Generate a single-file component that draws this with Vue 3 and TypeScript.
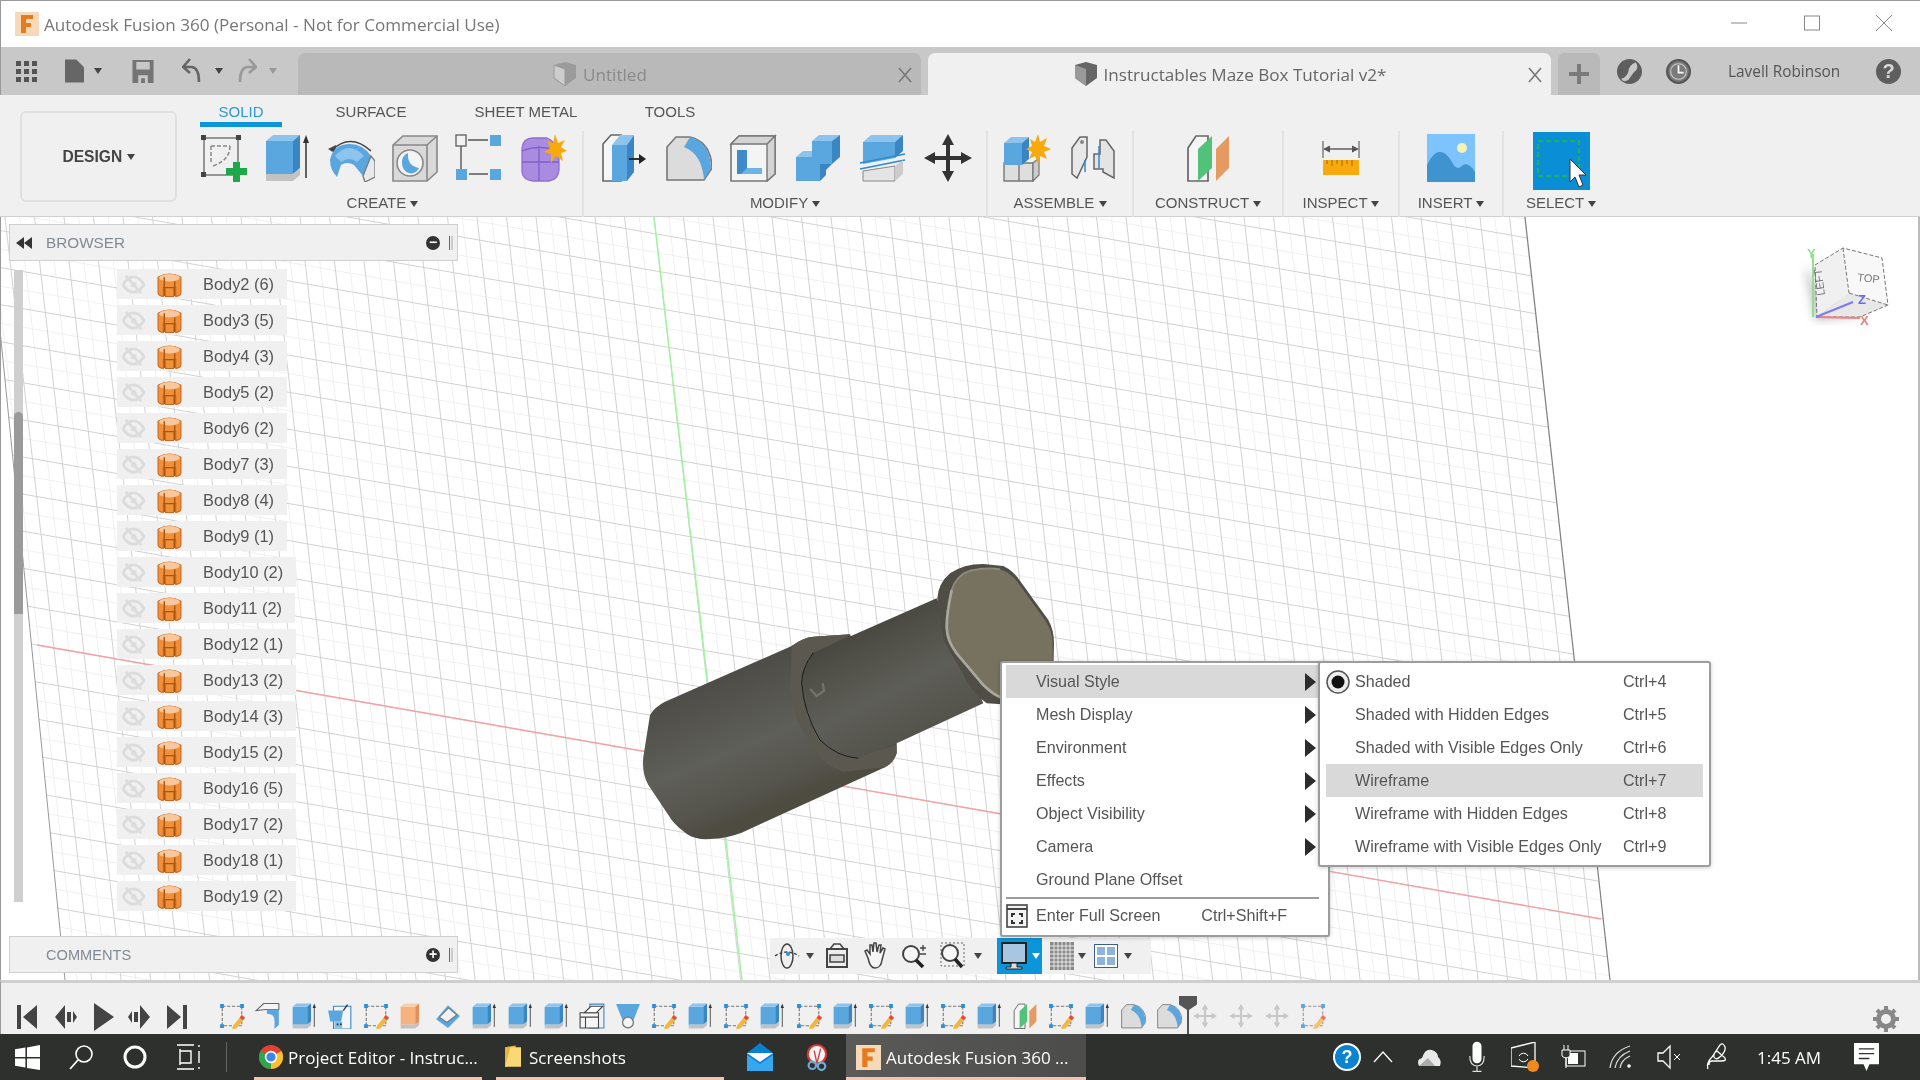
<template>
  <div class="app">
    <!-- shared icon symbols -->
    <svg class="defs" width="0" height="0" aria-hidden="true">
      <symbol id="new-sketch" viewBox="0 0 48 48">
        <path d="M5 4H39V41H5Z" fill="none" stroke="#777" stroke-width="1.5" />
        <path d="M12 12H31M12 12V30M31 12Q31 26 14 32" fill="none" stroke="#888" stroke-width="1.5" stroke-dasharray="4 2" />
        <path d="M2 1h5v5H2ZM37 1h5v5h-5ZM2 38h5v5H2Z" fill="#444" />
        <path d="M34 28h7v6h7v7h-7v7h-7v-7h-7v-7h7Z" fill="#1fa84a" />
      </symbol>
      <symbol id="extrude" viewBox="0 0 48 48">
        <path d="M3 7H30V40H3Z" fill="#5aa7e0" />
        <path d="M3 7L10 1H37L30 7Z" fill="#8cc4ee" />
        <path d="M30 7L37 1V34L30 40Z" fill="#3a86c4" />
        <path d="M3 40H30L37 34V41L30 47H3Z" fill="#c2c2c2" />
        <path d="M43 44V5" stroke="#333" stroke-width="1.5" />
        <path d="M43 1L46 9H40Z" fill="#333" />
      </symbol>
      <symbol id="revolve" viewBox="0 0 48 48">
        <path d="M4 17Q23 -2 44 17" fill="none" stroke="#444" stroke-width="1.6" />
        <path d="M1 15L9 11L8 19Z" fill="#444" />
        <path d="M3 26Q6 10 23 10Q36 10 44 22L38 36L36 42L27 31Q20 27 14 31L10 43Q3 36 3 26Z" fill="#5aa7e0" />
        <path d="M8 22Q22 6 37 22L30 28Q22 22 14 28Z" fill="#8cc4ee" />
        <path d="M44 22L48 27V43L38 48L36 42Z" fill="#e9e9e9" stroke="#777" stroke-width="1.3" />
      </symbol>
      <symbol id="hole" viewBox="0 0 48 48">
        <path d="M2 11L12 2H46V38L36 47H2Z" fill="#d9d9d9" stroke="#888" stroke-width="1.6" />
        <path d="M2 11H36V47M36 11L46 2" fill="none" stroke="#888" stroke-width="1.6" />
        <circle cx="19" cy="29" r="13" fill="#f4f4f4" stroke="#888" stroke-width="1.6" />
        <path d="M11 29A9 10 0 0 0 28 34Q16 32 17 19A9 10 0 0 0 11 29Z" fill="#5aa7e0" />
      </symbol>
      <symbol id="pattern" viewBox="0 0 48 48">
        <path d="M6 10V38M13 6H33M14 40H33" stroke="#555" stroke-width="1.4" fill="none" />
        <rect x="1" y="1" width="10" height="11" fill="#f3f3f3" stroke="#666" stroke-width="1.4" />
        <rect x="35" y="1" width="11" height="11" fill="#5aa7e0" />
        <rect x="1" y="35" width="11" height="11" fill="#5aa7e0" />
        <rect x="35" y="35" width="11" height="11" fill="#5aa7e0" />
      </symbol>
      <symbol id="create-form" viewBox="0 0 48 48">
        <path d="M3 14Q4 4 14 4H28Q34 6 40 16V36Q39 46 30 47H14Q4 46 3 38Z" fill="#a98be0" stroke="#8d6fd1" stroke-width="1.3" />
        <path d="M3 28H40M20 12V47M3 17Q20 10 40 17" stroke="#8160c8" stroke-width="1.3" fill="none" />
        <path d="M36 0L39 9L46 6L42 13L48 17L42 19L44 27L37 22L32 29L32 20L25 18L31 14L28 6L34 9Z" fill="#f7a90e" />
      </symbol>
      <symbol id="press-pull" viewBox="0 0 48 48">
        <path d="M4 47V10L12 1H22V47Z" fill="#f6f6f6" stroke="#666" stroke-width="1.6" />
        <path d="M13 11H28V47H13Z" fill="#5aa7e0" />
        <path d="M13 11L21 1H35L28 11Z" fill="#8cc4ee" />
        <path d="M28 11L35 1V38L28 47Z" fill="#3a86c4" />
        <path d="M30 25H43" stroke="#222" stroke-width="1.8" />
        <path d="M47 25L40 20V30Z" fill="#222" />
      </symbol>
      <symbol id="fillet" viewBox="0 0 48 48">
        <path d="M3 46V13L12 3H26Q47 8 48 34L40 46Z" fill="#dcdcdc" stroke="#777" stroke-width="1.6" />
        <path d="M26 3L20 13Q38 20 40 46L47 34Q46 8 26 3Z" fill="#5aa7e0" />
      </symbol>
      <symbol id="shell" viewBox="0 0 48 48">
        <path d="M2 10L10 2H46V40L38 47H2Z" fill="#f4f4f4" stroke="#777" stroke-width="1.6" />
        <path d="M38 10L46 2V40L38 47ZM2 10L10 2H46L38 10Z" fill="#d4d4d4" stroke="#777" stroke-width="1.4" />
        <path d="M8 16H18V34H33V40H8Z" fill="#3f8bc9" />
        <path d="M18 34H33V40H12Z" fill="#6db3e6" />
      </symbol>
      <symbol id="combine" viewBox="0 0 48 48">
        <path d="M18 7H38V30H18Z" fill="#5aa7e0" />
        <path d="M18 7L25 1H46L38 7Z" fill="#8cc4ee" />
        <path d="M38 7L46 1V23L38 30Z" fill="#3a86c4" />
        <path d="M2 23H26V47H2Z" fill="#5aa7e0" />
        <path d="M2 23L9 17H18V23Z" fill="#8cc4ee" />
        <path d="M26 30H38L32 36V41L26 47Z" fill="#3a86c4" />
      </symbol>
      <symbol id="split" viewBox="0 0 48 48">
        <path d="M4 8H36V24L4 30Z" fill="#5aa7e0" />
        <path d="M4 8L12 1H44L36 8Z" fill="#8cc4ee" />
        <path d="M36 8L44 1V17L36 24Z" fill="#3a86c4" />
        <path d="M1 29L46 20M1 35L46 26" stroke="#2e8bd3" stroke-width="1.7" />
        <path d="M4 37L36 32V47H4Z" fill="#e4e4e4" stroke="#888" />
        <path d="M36 32L44 26V40L36 47Z" fill="#ccc" />
      </symbol>
      <symbol id="move" viewBox="0 0 48 48">
        <path d="M24 0L30 11H26V22H37V18L48 24L37 30V26H26V37H30L24 48L18 37H22V26H11V30L0 24L11 18V22H22V11H18Z" fill="#333" />
      </symbol>
      <symbol id="assemble" viewBox="0 0 48 48">
        <path d="M1 29H16V47H1ZM16 29H30V47H16Z" fill="#dedede" stroke="#777" stroke-width="1.4" />
        <path d="M30 29L36 24V41L30 47Z" fill="#ccc" stroke="#777" stroke-width="1.2" />
        <path d="M1 9H19V31H1Z" fill="#5aa7e0" />
        <path d="M1 9L8 3H26L19 9Z" fill="#8cc4ee" />
        <path d="M19 9L26 3V25L19 31Z" fill="#3a86c4" />
        <path d="M35 0L37 8L44 4L41 12L48 15L41 18L44 25L37 22L35 30L32 22L26 25L29 18L23 15L29 12L27 5L32 8Z" fill="#f7a90e" />
      </symbol>
      <symbol id="joint" viewBox="0 0 48 48">
        <path d="M3 40V14L11 3H18V23L8 44Z" fill="#e8e8e8" stroke="#666" stroke-width="1.5" />
        <path d="M45 44V17L37 6H31V20H25V35H34V38Z" fill="#e4e4e4" stroke="#666" stroke-width="1.5" />
        <path d="M30 12V34M16 26V38" stroke="#2e8bd3" stroke-width="1.5" />
        <circle cx="13" cy="8" r="2" fill="#888" />
      </symbol>
      <symbol id="construct" viewBox="0 0 48 48">
        <path d="M4 47V14L12 2H24V47Z" fill="#f5f5f5" stroke="#666" stroke-width="1.7" />
        <path d="M14 47V15L28 2V34Z" fill="#52c27a" />
        <path d="M32 47V15L45 2V34Z" fill="#e59a62" />
      </symbol>
      <symbol id="inspect" viewBox="0 0 48 48">
        <path d="M6 7V24M42 7V24" stroke="#666" stroke-width="1.2" />
        <path d="M8 15H40" stroke="#555" stroke-width="1.4" />
        <path d="M6 15L13 11.5V18.500ZM42 15L35 11.5V18.500Z" fill="#555" />
        <rect x="6" y="26" width="36" height="15" fill="#f7a90e" />
        <path d="M10 26v4M15 26v6M20 26v4M25 26v6M30 26v4M35 26v6" stroke="#a06a08" stroke-width="1" />
      </symbol>
      <symbol id="insert" viewBox="0 0 48 48">
        <rect width="48" height="48" fill="#7dc4ff" />
        <circle cx="35" cy="14" r="5" fill="#f7f3b4" />
        <path d="M0 48V31Q12 6 25 28Q30 38 36 31Q42 28 48 38V48Z" fill="#3f93cf" />
      </symbol>
      <symbol id="t-sketch" viewBox="0 0 48 48">
        <path d="M6 6H42V42H6Z" fill="none" stroke="#777" stroke-width="2" stroke-dasharray="6 3" />
        <path d="M2 2h7v7H2ZM39 2h7v7h-7ZM2 39h7v7H2Z" fill="#2b8fdc" />
        <path d="M42 22L48 27L32 47L24 48L26 42Z" fill="#f4b63e" />
        <path d="M42 22L48 27L44 32L38 27Z" fill="#e44" />
      </symbol>
      <symbol id="t-fold" viewBox="0 0 48 48">
        <path d="M2 14L16 1H44V12H20Z" fill="#f5f5f5" stroke="#666" stroke-width="2" />
        <path d="M22 12H44V40L36 48V32Q36 20 22 20Z" fill="#5aa7e0" />
      </symbol>
      <symbol id="t-doc" viewBox="0 0 48 48">
        <path d="M12 6H44V48H12Z" fill="#f5f5f5" stroke="#3a86c4" stroke-width="2" />
        <path d="M2 14H30L26 34H6Z" fill="#5aa7e0" />
        <path d="M14 34H28V46H14Z" fill="#7fbde9" />
        <path d="M30 14L38 3" stroke="#333" stroke-width="2.5" />
        <path d="M18 38h3v3h-3ZM24 38h3v3h-3Z" fill="#333" />
      </symbol>
      <symbol id="t-orange" viewBox="0 0 48 48">
        <path d="M3 7H30V40H3Z" fill="#f5b27e" />
        <path d="M3 7L10 1H37L30 7Z" fill="#f9cfa9" />
        <path d="M30 7L37 1V34L30 40Z" fill="#e0915a" />
        <path d="M3 40H30L37 34V41L30 47H3Z" fill="#c2c2c2" />
      </symbol>
      <symbol id="t-plane" viewBox="0 0 48 48">
        <path d="M2 30L24 4L46 24L24 46Z" fill="#5aa7e0" />
        <path d="M8 26L25 9L40 22L22 36Z" fill="#f2f2f2" stroke="#777" stroke-width="2" />
      </symbol>
      <symbol id="t-table" viewBox="0 0 48 48">
        <path d="M20 2H46V46H20Z" fill="#f0f0f0" stroke="#3a86c4" stroke-width="2" />
        <path d="M2 18H36V46H2Z" fill="#f5f5f5" stroke="#444" stroke-width="2" />
        <path d="M2 26H36M12 26V46" stroke="#444" stroke-width="2" />
        <path d="M10 18L22 6H44L32 18Z" fill="#fff" stroke="#444" stroke-width="2" />
      </symbol>
      <symbol id="t-loft" viewBox="0 0 48 48">
        <path d="M2 2H46L34 32H14Z" fill="#5aa7e0" />
        <circle cx="24" cy="36" r="10" fill="#f4f4f4" stroke="#777" stroke-width="2.4" />
      </symbol>
      <symbol id="t-move" viewBox="0 0 48 48">
        <path d="M24 2L30 12H26V22H36V18L46 24L36 30V26H26V36H30L24 46L18 36H22V26H12V30L2 24L12 18V22H22V12H18Z" fill="#bbb" />
      </symbol>
      <symbol id="body" viewBox="0 0 24 24">
        <path d="M1 5Q12 -1 23 5V20Q23 23 18 23.5V15H16V23.5H8V15H6V23.5Q1 23 1 20Z" fill="#f0903a" stroke="#c8661c" stroke-width="1" />
        <ellipse cx="12" cy="5.5" rx="10" ry="3.5" fill="#f8c79b" />
        <path d="M8 15H16M7 15V23M17 15V23M7 5V15M17 9V15" stroke="#a85510" stroke-width="1.4" fill="none" />
      </symbol>
      <symbol id="hidden-eye" viewBox="0 0 24 24">
        <path d="M1 12Q6 4 12 4Q18 4 23 12Q18 20 12 20Q6 20 1 12Z" fill="none" stroke="#dcdcdc" stroke-width="3" />
        <path d="M4 3L20 21" stroke="#dcdcdc" stroke-width="3" />
        <circle cx="12" cy="12" r="3" fill="#dcdcdc" />
      </symbol>
      <symbol id="close-x" viewBox="0 0 14 16">
        <path d="M1 1L13 15M13 1L1 15" stroke="#777" stroke-width="1.6" />
      </symbol>
    </svg>

    <!-- title bar -->
    <header class="titlebar">
      <svg class="app-icon" viewBox="0 0 24 24">
        <rect width="24" height="24" fill="#f6d9b8" />
        <path d="M6 3H18V7H11V11H16V15H11V21H6Z" fill="#e57a1e" />
      </svg>
      <span class="title">Autodesk Fusion 360 (Personal - Not for Commercial Use)</span>
      <div class="win-ctl">
        <svg viewBox="0 0 58 32" width="58" height="32"><path d="M19 15H35" stroke="#888" stroke-width="1" /></svg>
        <svg viewBox="0 0 58 32" width="58" height="32"><rect x="21.500" y="8" width="15" height="14" fill="none" stroke="#888" /></svg>
        <svg viewBox="0 0 58 32" width="58" height="32"><path d="M22 7L38 23M38 7L22 23" stroke="#888" /></svg>
      </div>
    </header>

    <!-- tab bar -->
    <div class="tabbar">
      <div class="qat">
        <svg class="q-grid" viewBox="0 0 21 21">
          <path d="M0 0h5v5H0ZM8 0h5v5H8ZM16 0h5v5h-5ZM0 8h5v5H0ZM8 8h5v5H8ZM16 8h5v5h-5ZM0 16h5v5H0ZM8 16h5v5H8ZM16 16h5v5h-5Z" fill="#555" />
        </svg>
        <svg class="q-doc" viewBox="0 0 20 24"><path d="M0 0H12L20 8V24H0Z" fill="#666" /></svg>
        <i class="caret q-c1"></i>
        <svg class="q-save" viewBox="0 0 22 24">
          <path d="M0 0H22V24H0Z" fill="#757575" />
          <path d="M4 2H18V10H4ZM6 16H16V24H13V19H9V24H6Z" fill="#c8c8c8" />
        </svg>
        <svg class="q-undo" viewBox="0 0 22 26"><path d="M8 1L1 9L8 15M2 9H10Q17 10 17 24" fill="none" stroke="#666" stroke-width="2.600" /></svg>
        <i class="caret q-c2"></i>
        <svg class="q-redo" viewBox="0 0 22 26"><path d="M14 1L21 9L14 15M20 9H12Q5 10 5 24" fill="none" stroke="#999" stroke-width="2.600" /></svg>
        <i class="caret q-c3"></i>
      </div>
      <div class="tab tab-off">
        <svg class="tab-cube" viewBox="0 0 24 26"><path d="M1 4L12 1L23 4V17L12 25L1 17Z" fill="#9b9b9b" /><path d="M1 4L12 8V25L1 17Z" fill="#ccc" stroke="#999" /></svg>
        <span>Untitled</span>
        <svg class="tab-x" width="14" height="16"><use href="#close-x" /></svg>
      </div>
      <div class="tab tab-on">
        <svg class="tab-cube" viewBox="0 0 24 26"><path d="M1 4L12 1L23 4V17L12 25L1 17Z" fill="#666" /><path d="M1 4L12 8V25L1 17Z" fill="#999" /></svg>
        <span>Instructables Maze Box Tutorial v2*</span>
        <svg class="tab-x" width="14" height="16"><use href="#close-x" /></svg>
      </div>
      <div class="plus">
        <svg viewBox="0 0 20 20" width="20" height="20"><path d="M8 0h4v8h8v4h-8v8H8v-8H0V8h8Z" fill="#7a7a7a" /></svg>
      </div>
      <div class="bar-right">
        <svg class="r-icon" viewBox="0 0 24 24">
          <circle cx="12" cy="12" r="12" fill="#5e5e5e" />
          <path d="M18 3Q22 9 16 13L11 20Q6 23 4 19Q9 18 11 12Q11 6 18 3Z" fill="#c8c8c8" />
        </svg>
        <svg class="r-icon" viewBox="0 0 24 24">
          <circle cx="12" cy="12" r="11" fill="#7a7a7a" stroke="#555" stroke-width="2" />
          <circle cx="12" cy="12" r="7.500" fill="none" stroke="#ccc" />
          <path d="M12 6V13H17" fill="none" stroke="#fff" stroke-width="1.600" />
        </svg>
        <span class="user">Lavell Robinson</span>
        <div class="help">?</div>
      </div>
    </div>

    <!-- ribbon -->
    <section class="ribbon">
      <button class="design">DESIGN <i class="caret"></i></button>
      <div class="ribbon-main">
        <nav class="ribbon-tabs">
          <span v-for="t in ribbonTabs" :key="t.name" class="rtab" :class="{ on: t.active }" :style="{ width: t.width + 'px' }">{{ t.name }}</span>
        </nav>
        <div class="groups">
          <div v-for="g in groups" :key="g.label" class="group" :style="{ width: g.width + 'px', paddingRight: g.shift + 'px' }">
            <div class="tools">
              <div v-for="id in g.icons" :key="id" class="tool" :style="{ width: g.cell + 'px' }">
                <svg width="48" height="48"><use :href="'#' + id" /></svg>
              </div>
              <div v-if="g.label === 'SELECT'" class="select-btn">
                <svg viewBox="0 0 57 58" width="57" height="58">
                  <rect x="5" y="9" width="41" height="35" fill="none" stroke="#1fb070" stroke-width="2" stroke-dasharray="5 3" />
                  <path d="M37 27V50L42 45L46 55L50 53L46 43H53Z" fill="#fff" stroke="#333" />
                </svg>
              </div>
            </div>
            <span class="group-label">{{ g.label }} <i class="caret"></i></span>
          </div>
        </div>
      </div>
    </section>

    <!-- viewport -->
    <main class="viewport">
      <svg class="grid" viewBox="0 217 1920 763" width="1920" height="763">
        <defs>
          <clipPath id="plane"><path d="M0 217H1525L1610 980H65L0 330Z" /></clipPath>
        </defs>
        <g clip-path="url(#plane)">
          <path v-for="l in minorLines" :key="l.key" :d="l.d" stroke="#f0f0f0" stroke-width="1" />
          <path v-for="l in majorLines" :key="l.key" :d="l.d" stroke="#d2d2d2" stroke-width="1" />
        </g>
        <path d="M1525 217L1610 980" stroke="#808080" stroke-width="1.200" fill="none" />
        <path d="M0 330L65 980" stroke="#999" stroke-width="1" fill="none" />
        <path d="M37 645L1601 919" stroke="#f6a0a6" stroke-width="1.400" />
        <path d="M654 217L742 980" stroke="#9df59d" stroke-width="1.400" />
      </svg>

      <svg class="model" viewBox="0 0 1500 990" width="500" height="330">
        <defs>
          <linearGradient id="shade-a" gradientUnits="userSpaceOnUse" x1="370" y1="380" x2="540" y2="790">
            <stop offset="0" stop-color="#4b4a44" />
            <stop offset=".55" stop-color="#5f5f59" />
            <stop offset=".85" stop-color="#55544d" />
            <stop offset="1" stop-color="#4e4b41" />
          </linearGradient>
          <linearGradient id="shade-b" gradientUnits="userSpaceOnUse" x1="820" y1="240" x2="980" y2="560">
            <stop offset="0" stop-color="#48473f" />
            <stop offset=".6" stop-color="#5e5e58" />
            <stop offset="1" stop-color="#54534c" />
          </linearGradient>
        </defs>
        <path d="M150 525Q165 500 195 485L575 318Q610 292 640 290L750 283L890 610V640Q880 670 855 682L425 878Q380 895 330 897Q290 900 265 885Q230 860 215 840L145 735Q125 700 130 650Z" fill="url(#shade-a)" />
        <path d="M575 318Q610 292 640 290L750 283L700 310L640 340L605 420L620 530L680 620L760 655L890 615V640Q880 670 855 682L730 695Q680 680 650 640L590 540L570 450Z" fill="#5b584f" />
        <path d="M640 338L760 285L1010 175L1150 490L890 610L770 655L700 640L650 590L610 490L605 400Z" fill="url(#shade-b)" />
        <path d="M640 338Q605 385 605 430Q612 520 660 600Q710 650 775 655" fill="none" stroke="#1d1d1a" stroke-width="3" />
        <path d="M630 447L650 468L672 452L668 430" fill="none" stroke="#74726a" stroke-width="7" />
        <path d="M1012 175Q1015 130 1050 100Q1090 72 1150 72L1210 78Q1240 92 1262 125L1345 240Q1362 270 1362 310L1360 400L1240 495L1160 490Q1130 470 1105 430L1030 300Z" fill="#4f4d46" />
        <path d="M1055 150Q1070 105 1110 92Q1160 82 1200 88Q1235 100 1255 130L1335 240Q1358 275 1358 310V400L1240 478Q1190 470 1150 435L1070 340Q1040 300 1040 260Z" fill="#77725f" />
        <path d="M1055 150Q1040 220 1040 260Q1040 300 1070 340L1150 435Q1180 465 1210 475" fill="none" stroke="#aaa89e" stroke-width="8" />
        <path d="M1055 150Q1070 105 1110 92Q1160 82 1200 88" fill="none" stroke="#8c897c" stroke-width="6" />
      </svg>

      <!-- browser panel -->
      <div class="panel browser">
        <svg class="back" viewBox="0 0 16 12" width="16" height="12"><path d="M8 0L0 6L8 12ZM16 0L8 6L16 12Z" fill="#333" /></svg>
        <span class="panel-title">BROWSER</span>
        <span class="round">−</span>
        <i class="handle"></i>
      </div>
      <div class="scroll"><i></i></div>
      <ul class="bodies">
        <li v-for="b in bodies" :key="b" class="body-row">
          <svg class="eye" width="23" height="23"><use href="#hidden-eye" /></svg>
          <svg class="cyl" width="25" height="25"><use href="#body" /></svg>
          <span>{{ b }}</span>
        </li>
      </ul>
      <div class="panel comments">
        <span class="panel-title">COMMENTS</span>
        <span class="round">+</span>
        <i class="handle"></i>
      </div>

      <!-- view cube -->
      <svg class="cube" viewBox="0 0 160 120" width="160" height="120">
        <defs><filter id="soft"><feGaussianBlur stdDeviation="5" /></filter></defs>
        <path d="M45 45L55 100L100 96L60 70Z" fill="#bbb" filter="url(#soft)" />
        <path d="M55 45L83 28L89 73L57 97Z" fill="#f0f0f0" />
        <path d="M83 28L122 38L128 85L89 73Z" fill="#f8f8f8" />
        <path d="M57 97L89 73L128 85L100 97Z" fill="#e8e8e8" />
        <path d="M55 45L83 28L122 38L128 85L100 97L57 97ZM83 28L89 73M89 73L128 85" fill="none" stroke="#777" stroke-dasharray="4 2" />
        <text class="cube-t" transform="translate(65 75) rotate(-98)">LEFT</text>
        <text x="97" y="61" class="cube-t" transform="rotate(6 98 62)">TOP</text>
        <path d="M53 34V97" stroke="#8fe08f" stroke-width="2" />
        <path d="M56 97L100 98" stroke="#ee8080" stroke-width="2" />
        <path d="M56 97L93 82" stroke="#7a7af0" stroke-width="2" />
        <text x="47" y="38" class="ax" fill="#8fe08f">Y</text>
        <text x="100" y="105" class="ax" fill="#ee8080">X</text>
        <text x="98" y="84" class="ax" fill="#6a6af0">Z</text>
      </svg>

      <!-- nav bar -->
      <div class="navbar">
        <svg class="nb-orbit" viewBox="0 0 26 26" width="26" height="26">
          <ellipse cx="13" cy="13" rx="6" ry="12" fill="none" stroke="#444" stroke-width="1.5" />
          <path d="M1 13Q13 5 25 13" fill="none" stroke="#444" stroke-width="1.5" stroke-dasharray="3 2" />
          <circle cx="14" cy="11" r="2" fill="#2b8fdc" />
        </svg>
        <i class="caret nc-orbit"></i>
        <svg viewBox="0 0 26 26" width="26" height="26">
          <path d="M3 6H23V24H3Z" fill="#eee" stroke="#444" stroke-width="2" />
          <path d="M6 12H20V19H6Z" fill="#ddd" stroke="#444" stroke-width="1.6" />
          <path d="M6 6L10 1H16L20 6" fill="none" stroke="#444" stroke-width="1.6" />
        </svg>
        <svg class="nb-hand" viewBox="0 0 26 28" width="26" height="28">
          <path d="M6 16L3 9L5 8L8 12L8 3L10 3L11 10L12 1L14 1L15 10L17 3L19 3L18 11L21 6L23 7L20 18Q19 26 13 26Q8 26 6 16Z" fill="#f6f6f6" stroke="#444" stroke-width="1.5" />
        </svg>
        <svg class="nb-zoom" viewBox="0 0 26 28" width="26" height="28">
          <circle cx="10" cy="12" r="8" fill="#f6f6f6" stroke="#444" stroke-width="2" />
          <path d="M15 18L22 25" stroke="#222" stroke-width="3.5" />
          <path d="M22 3V9M19 6H25M19 12H25" stroke="#444" stroke-width="1.4" />
        </svg>
        <svg class="nb-zoom" viewBox="0 0 26 28" width="26" height="28">
          <path d="M1 1H24V24H1Z" fill="none" stroke="#666" stroke-dasharray="2 2" />
          <circle cx="10" cy="11" r="8" fill="#f6f6f6" stroke="#444" stroke-width="2" />
          <path d="M15 17L22 25" stroke="#222" stroke-width="3.5" />
        </svg>
        <i class="caret nc-fit"></i>
        <div class="display-btn">
          <svg viewBox="0 0 28 28" width="28" height="28">
            <path d="M2 1H26V21H2Z" fill="#a8c6e2" stroke="#222" stroke-width="2" />
            <path d="M11 21H17V25H22V27H6V25H11Z" fill="#ddd" stroke="#222" />
          </svg>
          <i class="caret white"></i>
        </div>
        <svg class="nb-grid" viewBox="0 0 24 28" width="24" height="28">
          <rect width="24" height="28" fill="#888" />
          <path d="M4 0V28M8 0V28M12 0V28M16 0V28M20 0V28M0 4H24M0 8H24M0 12H24M0 16H24M0 20H24M0 24H24" stroke="#e9e9e9" stroke-width="1" />
        </svg>
        <i class="caret nc-grid"></i>
        <svg viewBox="0 0 24 24" width="24" height="24">
          <rect width="24" height="24" fill="#fff" stroke="#3c5e8c" stroke-width="2" />
          <path d="M3 3H11V11H3ZM13 3H21V11H13ZM3 13H11V21H3ZM13 13H21V21H13Z" fill="#8fb4dc" />
        </svg>
        <i class="caret nc-view"></i>
      </div>

      <!-- context menu -->
      <div class="menu">
        <div v-for="m in menuItems" :key="m.label" class="mrow" :class="{ hi: m.active }">
          <span>{{ m.label }}</span>
          <i v-if="m.sub" class="arrow"></i>
        </div>
        <hr class="msep" />
        <div class="mrow fs">
          <svg class="fs-icon" viewBox="0 0 22 24" width="22" height="24">
            <rect x="1" y="1" width="20" height="22" fill="#f3f3f3" stroke="#444" stroke-width="1.6" />
            <path d="M1 5H21" stroke="#444" stroke-width="2" />
            <path d="M5 9h4v2H7v2H5ZM17 9h-4v2h2v2h2ZM5 20h4v-2H7v-2H5ZM17 20h-4v-2h2v-2h2Z" fill="#333" />
          </svg>
          <span class="fs-text">Enter Full Screen</span>
          <span class="fs-key">Ctrl+Shift+F</span>
        </div>
      </div>
      <div class="submenu">
        <div v-for="s in subItems" :key="s.label" class="srow" :class="{ hi: s.active }">
          <svg v-if="s.checked" class="radio" viewBox="0 0 24 24" width="24" height="24">
            <circle cx="12" cy="12" r="11" fill="#eee" stroke="#555" stroke-width="1.5" />
            <circle cx="12" cy="12" r="6.500" fill="#111" />
          </svg>
          <span class="s-label">{{ s.label }}</span>
          <span class="s-key">{{ s.key }}</span>
        </div>
      </div>
    </main>

    <!-- timeline -->
    <footer class="timeline">
      <div class="player">
        <svg v-for="(p, i) in playerIcons" :key="i" viewBox="0 0 24 28" width="24" height="28"><path :d="p" fill="#444" /></svg>
      </div>
      <div class="steps">
        <div v-for="(t, i) in timelineSteps" :key="i" class="step" :class="{ ghost: i >= timelineDone }">
          <svg width="26" height="26"><use :href="'#' + t" /></svg>
        </div>
        <div class="marker"></div>
      </div>
      <svg class="gear" viewBox="0 0 26 26" width="26" height="26">
        <circle cx="13" cy="13" r="7.500" fill="none" stroke="#888" stroke-width="5" />
        <path d="M13 0V26M0 13H26M4 4L22 22M22 4L4 22" stroke="#888" stroke-width="4" stroke-dasharray="4 18" />
      </svg>
    </footer>

    <!-- taskbar -->
    <div class="taskbar">
      <div class="tb-cell">
        <svg viewBox="0 0 24 24" width="25" height="25"><path d="M0 4L10 2.500V11.500H0ZM11.500 2.300L24 0V11.500H11.500ZM0 13H10V21.500L0 20ZM11.500 13H24V24L11.500 22Z" fill="#fff" /></svg>
      </div>
      <div class="tb-cell">
        <svg viewBox="0 0 26 26" width="26" height="26"><circle cx="16" cy="10" r="8" fill="none" stroke="#fff" stroke-width="1.6" /><path d="M10 16L2 25" stroke="#fff" stroke-width="1.8" /></svg>
      </div>
      <div class="tb-cell">
        <svg viewBox="0 0 26 26" width="26" height="26"><circle cx="13" cy="13" r="10" fill="none" stroke="#fff" stroke-width="3" /></svg>
      </div>
      <div class="tb-cell">
        <svg viewBox="0 0 26 26" width="26" height="26"><path d="M1 1H18M1 25H18M4 5V7H15V19H4V21M4 7V19M23 1V3M23 7V19M23 23V25" fill="none" stroke="#fff" stroke-width="1.4" /></svg>
      </div>
      <i class="tb-div"></i>
      <div class="task task-chrome">
        <svg viewBox="0 0 24 24" width="24" height="24">
          <circle cx="12" cy="12" r="12" fill="#e44134" />
          <path d="M12 12L22.400 6A12 12 0 0 1 12 24Z" fill="#fbc02d" />
          <path d="M12 12L12 24A12 12 0 0 1 1.600 6Z" fill="#2ea64c" />
          <circle cx="12" cy="12" r="5.400" fill="#3f86ea" stroke="#fff" stroke-width="1.6" />
        </svg>
        <span>Project Editor - Instruc...</span>
      </div>
      <div class="task task-folder">
        <svg viewBox="0 0 18 26" width="16" height="26">
          <path d="M0 2L12 0V22L0 24Z" fill="#e2b53c" />
          <path d="M6 2H18V24H0Z" fill="#f9d976" />
        </svg>
        <span>Screenshots</span>
      </div>
      <div class="tb-cell tb-mail">
        <svg viewBox="0 0 26 28" width="26" height="28">
          <path d="M0 10L13 0L26 10V28H0Z" fill="#0a7fd0" />
          <path d="M0 10H26L13 19Z" fill="#fff" />
          <path d="M0 12L13 21L26 12V28H0Z" fill="#36a7ee" />
        </svg>
      </div>
      <div class="tb-cell tb-snip">
        <svg viewBox="0 0 26 30" width="24" height="28">
          <circle cx="14" cy="12" r="10" fill="#f3f3f3" stroke="#d33" stroke-width="2.4" />
          <path d="M11 8L14 22M18 6L14 22" stroke="#c44" stroke-width="1.5" />
          <circle cx="9" cy="24" r="4" fill="none" stroke="#6aa9d8" stroke-width="2.4" />
          <circle cx="19" cy="25" r="4" fill="none" stroke="#6aa9d8" stroke-width="2.4" />
        </svg>
      </div>
      <div class="task active">
        <svg viewBox="0 0 24 24" width="25" height="25">
          <rect width="24" height="24" fill="#f6d9b8" />
          <path d="M6 3H18V7H11V11H16V15H11V21H6Z" fill="#e57a1e" />
        </svg>
        <span>Autodesk Fusion 360 ...</span>
      </div>
      <div class="tray">
        <div class="tr">
          <div class="tb-help">?</div>
        </div>
        <div class="tr tr-caret">
          <svg viewBox="0 0 20 12" width="20" height="12"><path d="M1 11L10 1L19 11" fill="none" stroke="#fff" stroke-width="1.3" /></svg>
        </div>
        <div class="tr tr-cloud">
          <svg viewBox="0 0 26 22" width="26" height="22"><path d="M3 20Q0 13 6 12Q9 2 16 4Q22 6 22 11Q26 14 24 20Z" fill="#e9e9e9" /><path d="M3 20L12 12L19 20Z" fill="#aaa" /></svg>
        </div>
        <div class="tr">
          <svg viewBox="0 0 20 34" width="18" height="32"><rect x="5" y="0" width="10" height="24" rx="5" fill="#fff" /><path d="M2 16Q2 27 10 27Q18 27 18 16M10 27V33M5 33H15" fill="none" stroke="#ddd" stroke-width="1.3" /></svg>
        </div>
        <div class="tr">
          <svg viewBox="0 0 28 30" width="28" height="30">
            <path d="M0 6L24 0V26L0 24Z" fill="none" stroke="#fff" stroke-width="1.3" />
            <path d="M8 14a5 5 0 0 1 9 0M17 17a5 5 0 0 1-9 0" fill="none" stroke="#fff" />
            <circle cx="22" cy="24" r="6" fill="#f08a1e" />
          </svg>
        </div>
        <div class="tr">
          <svg viewBox="0 0 26 26" width="26" height="26">
            <rect x="6" y="7" width="19" height="15" fill="none" stroke="#fff" />
            <rect x="8" y="9" width="10" height="11" fill="#fff" />
            <path d="M4 1V6M8 1V6M2 6H10V12Q6 16 2 12ZM6 14V24" fill="#333" stroke="#fff" />
          </svg>
        </div>
        <div class="tr">
          <svg viewBox="0 0 24 24" width="24" height="24">
            <path d="M1 23Q3 7 21 1M6 23Q8 11 21 6M11 23Q12 15 21 11" fill="none" stroke="#ddd" stroke-width="1.3" />
            <circle cx="20" cy="21" r="1.8" fill="#fff" />
          </svg>
        </div>
        <div class="tr">
          <svg viewBox="0 0 24 26" width="24" height="26">
            <path d="M1 9H6L13 2V24L6 17H1Z" fill="none" stroke="#fff" stroke-width="1.3" />
            <path d="M17 10L23 16M23 10L17 16" stroke="#fff" />
          </svg>
        </div>
        <div class="tr">
          <svg viewBox="0 0 22 28" width="22" height="28">
            <path d="M2 26Q0 20 6 14L14 2Q17 -1 19 4Q20 8 15 13Q10 18 8 14Q7 10 11 8L18 14Q22 18 15 18L6 18Q3 18 3 22" fill="none" stroke="#fff" stroke-width="1.3" />
          </svg>
        </div>
        <span class="clock">1:45 AM</span>
        <div class="tr tr-notes">
          <svg viewBox="0 0 26 30" width="25" height="29">
            <path d="M0 0H26V22H16L13 29L10 22H0Z" fill="#fff" />
            <path d="M5 6H21M5 11H21M5 16H16" stroke="#333" stroke-width="1.4" />
          </svg>
        </div>
      </div>
    </div>
  </div>
</template>

<script setup lang="ts">
import { computed } from 'vue'

interface Group {
  label: string
  width: number
  cell: number
  shift: number
  icons: string[]
}

const ribbonTabs = [
  { name: 'SOLID', width: 82, active: true },
  { name: 'SURFACE', width: 178 },
  { name: 'SHEET METAL', width: 132 },
  { name: 'TOOLS', width: 156 }
]

const groups: Group[] = [
  { label: 'CREATE', width: 393, cell: 64, shift: 8, icons: ['new-sketch', 'extrude', 'revolve', 'hole', 'pattern', 'create-form'] },
  { label: 'MODIFY', width: 404, cell: 65, shift: 0, icons: ['press-pull', 'fillet', 'shell', 'combine', 'split', 'move'] },
  { label: 'ASSEMBLE', width: 146, cell: 66, shift: 0, icons: ['assemble', 'joint'] },
  { label: 'CONSTRUCT', width: 150, cell: 66, shift: 0, icons: ['construct'] },
  { label: 'INSPECT', width: 116, cell: 66, shift: 0, icons: ['inspect'] },
  { label: 'INSERT', width: 104, cell: 66, shift: 0, icons: ['insert'] },
  { label: 'SELECT', width: 114, cell: 66, shift: 0, icons: [] }
]

const bodyCounts = [6, 5, 3, 2, 2, 3, 4, 1, 2, 2, 1, 2, 3, 2, 5, 2, 1, 2]
const bodies = bodyCounts.map((c, i) => `Body${i + 2} (${c})`)

const menuItems = [
  { label: 'Visual Style', sub: true, active: true },
  { label: 'Mesh Display', sub: true },
  { label: 'Environment', sub: true },
  { label: 'Effects', sub: true },
  { label: 'Object Visibility', sub: true },
  { label: 'Camera', sub: true },
  { label: 'Ground Plane Offset', sub: false }
]

const subItems = [
  { label: 'Shaded', key: 'Ctrl+4', checked: true },
  { label: 'Shaded with Hidden Edges', key: 'Ctrl+5' },
  { label: 'Shaded with Visible Edges Only', key: 'Ctrl+6' },
  { label: 'Wireframe', key: 'Ctrl+7', active: true },
  { label: 'Wireframe with Hidden Edges', key: 'Ctrl+8' },
  { label: 'Wireframe with Visible Edges Only', key: 'Ctrl+9' }
]

const playerIcons = [
  'M2 2H6V26H2ZM22 2V26L8 14Z',
  'M12 2V26L2 14ZM14 9H18V19H14ZM20 8L24 14L20 20Z',
  'M4 0L24 14L4 28Z',
  'M12 2V26L22 14ZM6 9H10V19H6ZM4 8L0 14L4 20Z',
  'M2 2L16 14L2 26ZM18 2H22V26H18Z'
]

const timelineSteps = [
  't-sketch', 't-fold', 'extrude', 't-doc', 't-sketch', 't-orange', 't-plane', 'extrude', 'extrude', 'extrude',
  't-table', 't-loft', 't-sketch', 'extrude', 't-sketch', 'extrude', 't-sketch', 'extrude', 't-sketch', 'extrude',
  't-sketch', 'extrude', 'construct', 't-sketch', 'extrude', 'fillet', 'fillet', 't-move', 't-move', 't-move', 't-sketch'
]
const timelineDone = 27

// ground plane: two families of parallel lines, a major line every 2nd step
const gridLines = computed(() => {
  const lines: { key: string; d: string; major: boolean }[] = []
  for (let i = -60; i < 130; i++) {
    const x0 = 654 + i * 14.75
    lines.push({ key: 'v' + i, d: `M${x0} 217L${x0 + 86.6} 980`, major: i % 2 === 0 })
  }
  for (let j = -50; j < 70; j++) {
    const y0 = 638.5 + j * 18.55
    lines.push({ key: 'h' + j, d: `M0 ${y0}L1920 ${y0 + 336}`, major: j % 2 === 0 })
  }
  return lines
})
const majorLines = computed(() => gridLines.value.filter((l) => l.major))
const minorLines = computed(() => gridLines.value.filter((l) => !l.major))
</script>

<style scoped>
.app {
  position: relative;
  width: 1920px;
  height: 1080px;
  overflow: hidden;
  background: #fff;
  font-family: "Liberation Sans", Arial, sans-serif;
  color: #555;
  filter: blur(0.4px);
}

.defs {
  position: absolute;
}

.caret {
  display: inline-block;
  width: 0;
  height: 0;
  border-left: 4px solid transparent;
  border-right: 4px solid transparent;
  border-top: 6px solid #444;
  vertical-align: middle;
}

.caret.white {
  border-top-color: #fff;
}

/* title bar */
.titlebar {
  height: 47px;
  box-sizing: border-box;
  border-top: 1px solid #9a9a9a;
  border-left: 1px solid #9a9a9a;
  display: flex;
  align-items: center;
  padding-left: 14px;
  background: #fff;
}

.app-icon {
  width: 24px;
  height: 26px;
  margin-right: 5px;
}

.title {
  font-family: "Open Sans", sans-serif;
  font-size: 17.1px;
  color: #777;
}

.win-ctl {
  margin-left: auto;
  margin-right: 8px;
  display: flex;
  gap: 13px;
}

/* tab bar */
.tabbar {
  height: 48px;
  background: #c8c8c8;
  display: flex;
  align-items: flex-end;
  border-left: 1px solid #9a9a9a;
}

.qat {
  width: 297px;
  height: 48px;
  display: flex;
  align-items: center;
}

.q-grid {
  width: 21px;
  height: 21px;
  margin-left: 15px;
}

.q-doc {
  width: 19px;
  height: 24px;
  margin-left: 28px;
}

.q-c1 {
  margin-left: 10px;
}

.q-save {
  width: 22px;
  height: 23px;
  margin-left: 30px;
}

.q-undo {
  width: 22px;
  height: 26px;
  margin-left: 28px;
}

.q-c2 {
  margin-left: 11px;
}

.q-redo {
  width: 22px;
  height: 26px;
  margin-left: 12px;
}

.q-c3 {
  margin-left: 12px;
  border-top-color: #999;
}

.tab {
  position: relative;
  width: 623px;
  height: 42px;
  border-radius: 7px 7px 0 0;
  display: flex;
  align-items: center;
  justify-content: center;
  gap: 6px;
  font-family: "Open Sans", sans-serif;
  font-size: 17.1px;
  color: #777;
  box-sizing: border-box;
  padding-right: 19px;
}

.tab-off {
  background: #b9b9b9;
  color: #8a8a8a;
}

.tab-on {
  background: #f0f0f0;
  margin-left: 7px;
  color: #666;
}

.tab-cube {
  width: 24px;
  height: 26px;
}

.tab-x {
  position: absolute;
  right: 9px;
  top: 14px;
}

.plus {
  width: 42px;
  height: 42px;
  margin-left: 7px;
  background: #b9b9b9;
  border-radius: 6px 6px 0 0;
  display: flex;
  align-items: center;
  justify-content: center;
}

.bar-right {
  flex: 1;
  height: 48px;
  display: flex;
  align-items: center;
}

.r-icon {
  width: 25px;
  height: 25px;
  margin-left: 17px;
}

.r-icon + .r-icon {
  margin-left: 24px;
}

.user {
  margin-left: 37px;
  font-family: "Open Sans", sans-serif;
  font-size: 15.4px;
  color: #555;
}

.help {
  margin-left: 36px;
  width: 25px;
  height: 25px;
  border-radius: 50%;
  background: #5e5e5e;
  color: #d8d8d8;
  font-weight: 700;
  font-size: 20px;
  line-height: 25px;
  text-align: center;
}

/* ribbon */
.ribbon {
  height: 122px;
  background: #f0f0f0;
  display: flex;
  border-bottom: 1px solid #d0d0d0;
  box-sizing: border-box;
}

.design {
  width: 157px;
  height: 91px;
  margin: 16px 14px 0 20px;
  background: #f0f0f0;
  border: 2px solid #e0e0e0;
  border-radius: 6px;
  font: 700 15.6px "Liberation Sans", Arial, sans-serif;
  color: #444;
}

.ribbon-main {
  flex: 1;
}

.ribbon-tabs {
  height: 36px;
  display: flex;
  padding-left: 9px;
}

.rtab {
  height: 33px;
  padding-top: 8px;
  box-sizing: border-box;
  font-size: 15px;
  color: #555;
  text-align: center;
  white-space: nowrap;
}

.rtab.on {
  height: 32px;
  color: #2b9ad6;
  border-bottom: 5px solid #0a96d8;
}

.groups {
  display: flex;
}

.group {
  height: 86px;
  display: flex;
  flex-direction: column;
  align-items: center;
  border-right: 2px solid #e3e3e3;
  box-sizing: border-box;
}

.group:last-child {
  border-right: 0;
}

.tools {
  height: 60px;
  margin-top: 3px;
  display: flex;
  align-items: flex-start;
  justify-content: center;
}

.tool {
  display: flex;
  justify-content: center;
}

.select-btn {
  width: 57px;
  height: 58px;
  background: #0a8fd6;
  margin-top: -2px;
}

.group-label {
  font-size: 15px;
  color: #555;
  white-space: nowrap;
}

/* viewport */
.viewport {
  position: relative;
  height: 763px;
  background: #fff;
  overflow: hidden;
  border-left: 1px solid #9a9a9a;
  border-right: 2px solid #bbb;
  box-sizing: border-box;
}

.grid {
  position: absolute;
  left: -1px;
  top: 0;
}

.model {
  position: absolute;
  left: 599px;
  top: 323px;
}

.panel {
  position: absolute;
  left: 8px;
  width: 449px;
  box-sizing: border-box;
  background: #f0f0f0;
  border: 1px solid #cfcfcf;
  display: flex;
  align-items: center;
}

.browser {
  top: 7px;
  height: 37px;
}

.comments {
  top: 719px;
  height: 37px;
}

.back {
  position: absolute;
  left: 6px;
}

.panel-title {
  position: absolute;
  left: 36px;
  font-size: 15.3px;
  color: #808a94;
}

.comments .panel-title {
  font-size: 14.6px;
}

.round {
  position: absolute;
  right: 17px;
  width: 14px;
  height: 14px;
  border-radius: 50%;
  background: #333;
  color: #fff;
  font: 700 14px/13px "Liberation Sans", sans-serif;
  text-align: center;
}

.handle {
  position: absolute;
  right: 4px;
  width: 1px;
  height: 14px;
  border-left: 1px solid #666;
  border-right: 2px solid #ccc;
}

.scroll {
  position: absolute;
  left: 13px;
  top: 53px;
  width: 9px;
  height: 632px;
  background: #cfcfcf;
}

.scroll i {
  display: block;
  margin-top: 142px;
  height: 202px;
  background: #9a9a9a;
  border-radius: 5px 5px 0 0;
}

.bodies {
  position: absolute;
  left: 116px;
  top: 52px;
  margin: 0;
  padding: 0;
  list-style: none;
  display: flex;
  flex-direction: column;
  gap: 6px;
  align-items: flex-start;
}

.body-row {
  height: 30px;
  display: flex;
  align-items: center;
  background: #f0f0f0;
  padding-right: 13px;
  font-size: 16.4px;
  color: #555;
}

.eye {
  margin-left: 5px;
}

.cyl {
  margin-left: 12px;
  margin-right: 21px;
}

.cube {
  position: absolute;
  left: 1759px;
  top: 3px;
}

.cube-t {
  font-size: 11px;
  fill: #777;
  font-family: "Liberation Sans", sans-serif;
}

.ax {
  font-size: 13px;
  font-weight: 700;
  font-family: "Liberation Sans", sans-serif;
}

.navbar {
  position: absolute;
  left: 769px;
  top: 721px;
  height: 36px;
  width: 381px;
  background: #f0f0f0;
  display: flex;
  align-items: center;
}

.nb-orbit {
  margin-left: 4px;
}

.nc-orbit {
  margin: 0 10px 0 6px;
}

.nb-hand {
  margin-left: 12px;
}

.nb-zoom {
  margin-left: 13px;
}

.nc-fit {
  margin: 0 15px 0 8px;
}

.nb-grid {
  margin-left: 8px;
}

.nc-grid {
  margin: 0 8px 0 4px;
}

.nc-view {
  margin-left: 6px;
}

.display-btn {
  width: 45px;
  height: 36px;
  background: #0a96d8;
  display: flex;
  align-items: center;
  justify-content: center;
  gap: 4px;
}

/* menus */
.menu {
  position: absolute;
  left: 999px;
  top: 444px;
  width: 330px;
  height: 276px;
  box-sizing: border-box;
  background: #fff;
  border: 2px solid #9c9c9c;
  border-radius: 3px;
  padding: 2px 4px;
  font-size: 16.1px;
  color: #555;
  box-shadow: 0 1px 4px rgba(0, 0, 0, 0.2);
}

.mrow {
  height: 33px;
  display: flex;
  align-items: center;
  padding-left: 30px;
  position: relative;
  width: 312px;
  box-sizing: border-box;
}

.mrow.hi {
  background: #d9d9d9;
}

.arrow {
  position: absolute;
  right: 2px;
  border-top: 9px solid transparent;
  border-bottom: 9px solid transparent;
  border-left: 11px solid #2c2c2c;
}

.msep {
  margin: 1px 0 0 0;
  width: 313px;
  border: 0;
  border-top: 2px solid #9c9c9c;
}

.fs {
  width: 313px;
  padding-left: 0;
}

.fs-icon {
  margin-right: 8px;
}

.fs-key {
  margin-left: 41px;
}

.submenu {
  position: absolute;
  left: 1317px;
  top: 444px;
  width: 393px;
  height: 206px;
  box-sizing: border-box;
  background: #fff;
  border: 2px solid #9c9c9c;
  border-radius: 3px;
  padding: 2px 6px;
  font-size: 16.1px;
  color: #555;
  box-shadow: 0 1px 4px rgba(0, 0, 0, 0.2);
}

.srow {
  position: relative;
  height: 33px;
  display: flex;
  align-items: center;
  padding-left: 29px;
}

.srow.hi {
  background: #d9d9d9;
}

.radio {
  position: absolute;
  left: 0;
  top: 5px;
}

.s-key {
  position: absolute;
  left: 297px;
}

/* timeline */
.timeline {
  height: 54px;
  box-sizing: border-box;
  border-top: 3px solid #cfcfcf;
  background: #f0f0f0;
  display: flex;
  align-items: flex-end;
  border-left: 1px solid #9a9a9a;
}

.player {
  display: flex;
  gap: 13.5px;
  margin: 0 0 3px 14px;
}

.steps {
  position: relative;
  display: flex;
  margin-left: 25px;
  height: 51px;
  align-items: flex-end;
}

.step {
  width: 36.04px;
  height: 31px;
  display: flex;
  justify-content: center;
}

.step.ghost {
  opacity: 0.75;
}

.marker {
  position: absolute;
  left: 973px;
  top: 13px;
  bottom: 0;
  width: 2px;
  background: #555;
}

.marker::before {
  content: "";
  position: absolute;
  left: -8px;
  top: 0;
  width: 18px;
  height: 14px;
  background: #555;
  clip-path: polygon(0 0, 100% 0, 100% 60%, 55% 100%, 45% 100%, 0 60%);
}

.gear {
  margin-left: auto;
  margin-right: 21px;
  margin-bottom: 2px;
}

/* taskbar */
.taskbar {
  height: 46px;
  background: #2d302c;
  display: flex;
  color: #fff;
  font-family: "Open Sans", sans-serif;
  font-size: 17px;
}

.tb-cell {
  width: 54px;
  display: flex;
  align-items: center;
  justify-content: center;
}

.tb-mail {
  width: 68px;
}

.tb-snip {
  width: 52px;
  box-sizing: border-box;
  padding-right: 8px;
}

.tb-div {
  width: 1px;
  margin: 8px 27px 8px 10px;
  background: #666;
}

.task {
  width: 228px;
  box-sizing: border-box;
  border-bottom: 3px solid #f5c3ad;
  padding: 3px 0 0 5px;
  margin-right: 14px;
  display: flex;
  align-items: center;
  white-space: nowrap;
}

.task span {
  margin-left: 5px;
}

.task-folder {
  padding-left: 9px;
  margin-right: 2px;
}

.task-folder span {
  margin-left: 8px;
}

.task.active {
  width: 240px;
  margin-right: 0;
  padding-left: 10px;
  background: linear-gradient(90deg, #5a5a58, #4c4c4a);
}

.tray {
  flex: 1;
  display: flex;
  align-items: center;
  padding-left: 237px;
}

.tr {
  width: 48px;
  display: flex;
  justify-content: center;
  align-items: center;
}

.tr-caret {
  width: 24px;
}

.tr-cloud {
  margin-left: 10px;
}

.tr-notes {
  width: 46px;
  margin-left: 22px;
}

.tb-help {
  width: 24px;
  height: 24px;
  border-radius: 50%;
  border: 2px solid #fff;
  background: #0a84d0;
  color: #fff;
  font: 700 18px/24px "Liberation Sans", sans-serif;
  text-align: center;
}

.clock {
  margin-left: 16px;
  font-size: 17px;
}
</style>
